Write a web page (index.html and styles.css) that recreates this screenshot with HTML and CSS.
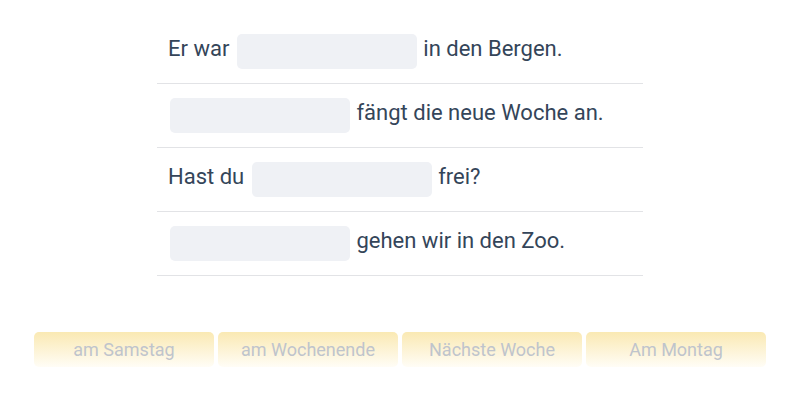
FILE: index.html
```html
<!DOCTYPE html>
<html lang="de">
<head>
  <meta charset="UTF-8">
  <title>Lückentext</title>
  <link rel="stylesheet" href="styles.css">
</head>
<body>
  <div class="sentences">
    <div class="row">Er war <span class="gap"></span> in den Bergen.</div>
    <div class="row"><span class="gap"></span> fängt die neue Woche an.</div>
    <div class="row">Hast du <span class="gap"></span> frei?</div>
    <div class="row"><span class="gap"></span> gehen wir in den Zoo.</div>
  </div>

  <div class="choices">
    <button class="choice">am Samstag</button>
    <button class="choice">am Wochenende</button>
    <button class="choice">Nächste Woche</button>
    <button class="choice">Am Montag</button>
  </div>
</body>
</html>
```

FILE: styles.css
```css
body {
  margin: 0;
  font-family: Roboto, "Liberation Sans", sans-serif;
  background-color: #fff;
  color: #344559;
}

.sentences {
  width: 486px;
  margin: 20px auto 0;
}

.row {
  height: 57px;
  border-bottom: 1px solid #e2e3e6;
  padding: 0 0 6px 11px;
  display: flex;
  align-items: center;
  white-space: pre;
  font-size: 22px;
}

.gap {
  display: inline-block;
  width: 180px;
  height: 35px;
  margin: 6px 1px 0;
  background-color: #eff1f5;
  border-radius: 5px;
}

.row .gap:first-child {
  margin-left: 2px;
}

.choices {
  display: flex;
  justify-content: center;
  gap: 4px;
  margin-top: 56px;
}

.choice {
  width: 180px;
  height: 35px;
  border: none;
  border-radius: 5px;
  background: linear-gradient(#fae9b3, #fffdf6);
  color: #bfc4cc;
  font-family: Roboto, "Liberation Sans", sans-serif;
  font-size: 18px;
  padding: 0;
}
```
